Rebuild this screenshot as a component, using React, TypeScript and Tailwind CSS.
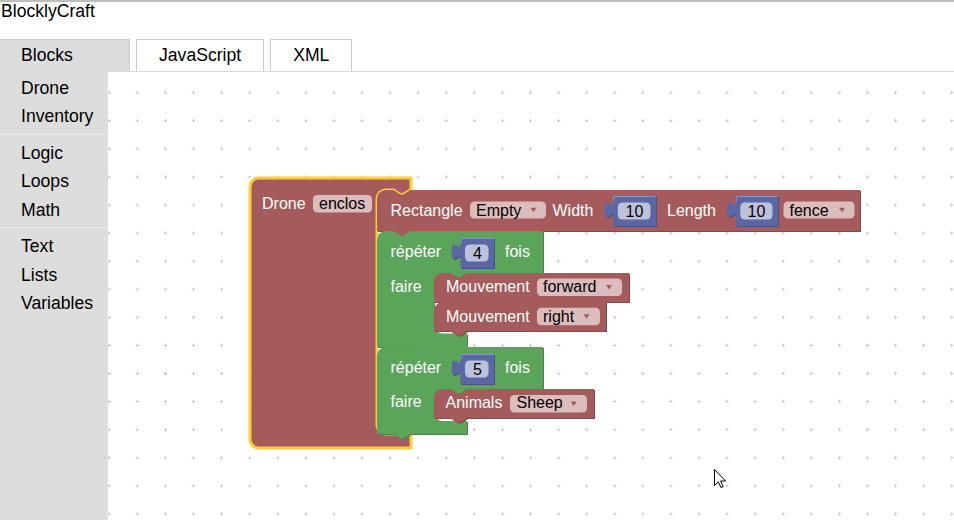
import React from "react";

const R = 8.8;
const NR = "l 6.6,4.4 3.3,0 6.6,-4.4";
const NL = "l -6.6,4.4 -3.3,0 -6.6,-4.4";

const C = {
  red: "#a55b5b",
  redD: "#844949",
  redF: "#dbbdbd",
  green: "#5ba55b",
  greenD: "#498449",
  blue: "#5b67a5",
  blueD: "#495284",
  blueF: "#bdc2db",
  yellow: "#ffcc33",
};

function stmtPath(x: number, y: number, r: number, b: number) {
  return `M ${x},${y + R} a ${R},${R} 0 0 1 ${R},${-R} H ${x + 16.5} ${NR} H ${r} V ${b} H ${x + 33} ${NL} H ${x} Z`;
}

function cPath(
  x: number,
  y: number,
  r: number,
  stTop: number,
  stX: number,
  stBot: number,
  armR: number,
  b: number
) {
  return `M ${x},${y + R} a ${R},${R} 0 0 1 ${R},${-R} H ${x + 16.5} ${NR} H ${r} V ${stTop} H ${stX + 33} ${NL} H ${stX + R} a ${R},${R} 0 0 0 ${-R},${R} V ${stBot - R} a ${R},${R} 0 0 0 ${R},${R} H ${armR} V ${b} H ${x + 33} ${NL} H ${x} Z`;
}

function valPath(tx: number, y: number, r: number, h: number) {
  const bx = tx + 8.8;
  return `M ${bx},${y} H ${r} V ${y + h} H ${bx} V ${y + 22} c 0,-11 -8.8,8.8 -8.8,-8.25 s 8.8,2.75 8.8,-8.25 Z`;
}

const dronePath = `M 250,${178 + R} a ${R},${R} 0 0 1 ${R},${-R} H 411 V 190 H 410 ${NL} H ${377 + R} a ${R},${R} 0 0 0 ${-R},${R} V ${434 - R} a ${R},${R} 0 0 0 ${R},${R} H 411 V 448 H ${250 + R} a ${R},${R} 0 0 1 ${-R},${-R} Z`;

function Shape({ d, fill, dark }: { d: string; fill: string; dark: string }) {
  return (
    <>
      <path d={d} fill={dark} transform="translate(1,1)" />
      <path d={d} fill={fill} />
    </>
  );
}

function Label({ x, y, t }: { x: number; y: number; t: string }) {
  return (
    <text x={x} y={y} fill="#ffffff">
      {t}
    </text>
  );
}

function Field({
  x,
  y,
  w,
  h = 17,
  t,
  tx,
  base,
  fill,
  arrow,
  arrowColor,
}: {
  x: number;
  y: number;
  w: number;
  h?: number;
  t: string;
  tx: number;
  base: number;
  fill: string;
  arrow?: number;
  arrowColor?: string;
}) {
  const cy = y + h / 2;
  return (
    <>
      <rect x={x} y={y} width={w} height={h} rx={4.4} ry={4.4} fill={fill} />
      <text x={tx} y={base} fill="#000000">
        {t}
      </text>
      {arrow !== undefined && (
        <polygon
          points={`${arrow - 3},${cy - 2.2} ${arrow + 3},${cy - 2.2} ${arrow},${cy + 2.3}`}
          fill={arrowColor}
        />
      )}
    </>
  );
}

function NumBlock({ tx, y, r, t, textX }: { tx: number; y: number; r: number; t: string; textX: number }) {
  const bx = tx + 8.8;
  return (
    <>
      <Shape d={valPath(tx, y, r, 30)} fill={C.blue} dark={C.blueD} />
      <path d={`M ${bx + 0.5},${y + 5.5} V ${y + 0.5} H ${r - 0.5}`} stroke="#8c95c4" strokeWidth={1} fill="none" />
      <Field
        x={bx + 4.5}
        y={y + 6.5}
        w={r - bx - 10}
        h={17}
        t={t}
        tx={textX}
        base={y + 20.5}
        fill={C.blueF}
      />
    </>
  );
}

function Workspace() {
  return (
    <svg
      className="absolute inset-0 w-full h-full font-['Liberation_Sans',Arial,sans-serif] text-[16px]"
      width="846"
      height="448"
    >
      <defs>
        <pattern id="grid" patternUnits="userSpaceOnUse" width="28.08" height="28.08" x="95.26" y="78.66">
          <path d="M 12.4,14.04 H 15.7 M 14.04,12.4 V 15.7" stroke="#c8c8c8" strokeWidth="1" fill="none" />
        </pattern>
      </defs>
      <g transform="translate(-108 -72)">
        <rect x="108" y="72" width="846" height="448" fill="url(#grid)" />

        {/* Drone block (selected) */}
        <path d={dronePath} fill={C.red} stroke={C.yellow} strokeWidth={3} />
        <Label x={262} y={209} t="Drone" />
        <Field x={313} y={195} w={59} h={17.5} t="enclos" tx={319} base={209} fill={C.redF} />

        {/* Rectangle */}
        <Shape d={stmtPath(377, 190, 860, 231)} fill={C.red} dark={C.redD} />
        <Label x={390.5} y={216} t="Rectangle" />
        <Field x={470} y={201.5} w={76} t="Empty" tx={476} base={216} fill={C.redF} arrow={533.5} arrowColor={C.red} />
        <Label x={552.5} y={216} t="Width" />
        <NumBlock tx={604.5} y={196} r={656} t="10" textX={625.5} />
        <Label x={667} y={216} t="Length" />
        <NumBlock tx={727} y={196} r={778} t="10" textX={747.5} />
        <Field x={783.5} y={201.5} w={71} t="fence" tx={789.5} base={216} fill={C.redF} arrow={842} arrowColor={C.red} />

        {/* Repeat 1 */}
        <Shape d={cPath(377, 231, 543, 273, 434, 333.5, 467, 347)} fill={C.green} dark={C.greenD} />
        <Label x={390.5} y={257} t="répéter" />
        <NumBlock tx={451.7} y={238} r={494} t="4" textX={473} />
        <Label x={505} y={257} t="fois" />
        <Label x={390.5} y={292} t="faire" />

        <Shape d={stmtPath(434, 273, 629, 302)} fill={C.red} dark={C.redD} />
        <Label x={446} y={292.3} t="Mouvement" />
        <Field x={537} y={278.5} w={85} h={17.5} t="forward" tx={543} base={292.3} fill={C.redF} arrow={609} arrowColor={C.red} />

        <Shape d={stmtPath(434, 302, 606, 331)} fill={C.red} dark={C.redD} />
        <Label x={446} y={321.7} t="Mouvement" />
        <Field x={537} y={307.8} w={63} h={17.5} t="right" tx={543} base={321.7} fill={C.redF} arrow={586.5} arrowColor={C.red} />

        {/* Repeat 2 */}
        <Shape d={cPath(377, 347, 543, 389, 434, 421, 467, 434)} fill={C.green} dark={C.greenD} />
        <Label x={390.5} y={372.7} t="répéter" />
        <NumBlock tx={451.7} y={354} r={494} t="5" textX={473} />
        <Label x={505} y={372.7} t="fois" />
        <Label x={390.5} y={407.3} t="faire" />

        <Shape d={stmtPath(434, 389, 594, 418)} fill={C.red} dark={C.redD} />
        <Label x={445.5} y={408.3} t="Animals" />
        <Field x={510} y={395} w={77} h={17.5} t="Sheep" tx={516.5} base={408.3} fill={C.redF} arrow={573.7} arrowColor={C.red} />

        {/* mouse cursor */}
        <path
          d="M 714.5,469.5 V 485.5 L 718.3,481.8 L 721,487.6 L 723.2,486.6 L 720.6,481 L 725.6,481 Z"
          fill="#ffffff"
          stroke="#000000"
          strokeWidth={1}
          strokeLinejoin="round"
        />
      </g>
    </svg>
  );
}

const toolboxGroups = [["Drone", "Inventory"], ["Logic", "Loops", "Math"], ["Text", "Lists", "Variables"]];

export default function App() {
  return (
    <div className="w-[954px] h-[520px] overflow-hidden bg-white text-black font-['Liberation_Sans',Arial,sans-serif]">
      <div className="h-[2px] bg-[#bdbdbd]" />
      <div className="h-[37px] pl-px text-[17.6px] leading-[18px]">BlocklyCraft</div>
      <div className="flex h-[32px] gap-[6px] text-[17.6px] leading-[30px]">
        <div className="w-[130px] h-[32px] bg-[#dddddd] border-t border-r border-[#cccccc] pl-[21px]">Blocks</div>
        <div className="h-[32px] border border-b-0 border-[#cccccc] px-[22px] bg-white">JavaScript</div>
        <div className="h-[32px] border border-b-0 border-[#cccccc] px-[22px] bg-white">XML</div>
      </div>
      <div className="flex h-[449px]">
        <div className="w-[108px] shrink-0 bg-[#dddddd] pt-[3px] text-[17.6px]">
          {toolboxGroups.map((g, gi) => (
            <div key={gi}>
              {gi > 0 && <div className="mt-[3.5px] mb-[4px] h-px bg-[#e9e9e9]" />}
              {g.map((item) => (
                <div key={item} className="h-[28.3px] leading-[28.3px] pl-[21px] whitespace-nowrap">
                  {item}
                </div>
              ))}
            </div>
          ))}
        </div>
        <div className="relative flex-1 border-t border-[#d9d9d9]">
          <Workspace />
        </div>
      </div>
    </div>
  );
}
